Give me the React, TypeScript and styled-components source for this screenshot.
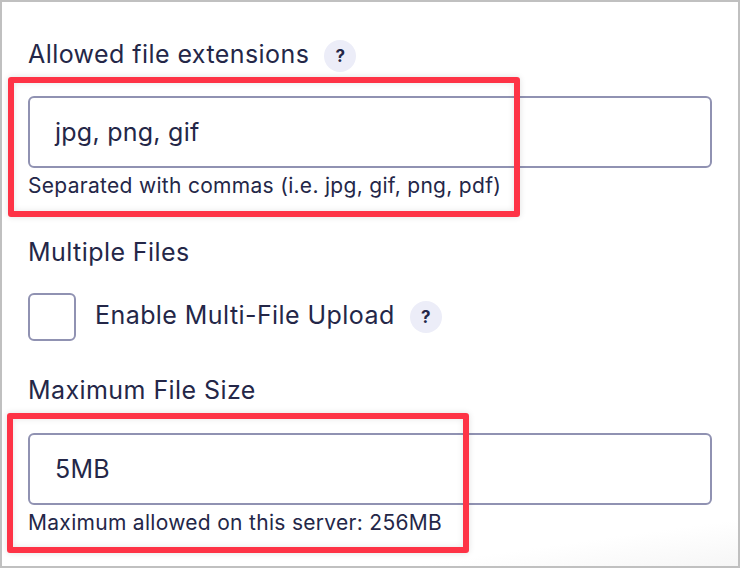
import React from 'react';
import styled, { createGlobalStyle } from 'styled-components';

const GlobalStyle = createGlobalStyle`
  html, body {
    margin: 0;
    padding: 0;
    background: #fff;
  }
  * {
    box-sizing: border-box;
  }
`;

const Frame = styled.div`
  width: 740px;
  height: 568px;
  overflow: hidden;
  padding: 38px 26px 0;
  border: 2px solid #c0c0c0;
  background: linear-gradient(172deg, #fff 93%, #f6f6f6 100%);
  font-family: Inter, 'Liberation Sans', sans-serif;
  color: #242748;
`;

const Field = styled.div`
  position: relative;
  display: flex;
  flex-direction: column;
  margin-bottom: ${(props: { $gap: number }) => props.$gap}px;
`;

const LabelRow = styled.div`
  display: flex;
  align-items: center;
  gap: 15px;
  height: 28px;
  font-size: 25px;
  line-height: 28px;
  letter-spacing: 0.43px;
`;

const CheckLabel = styled(LabelRow)`
  margin-top: -4px;
`;

const HelpBadge = styled.span`
  display: flex;
  align-items: center;
  justify-content: center;
  width: 32px;
  height: 32px;
  margin-top: 3px;
  border-radius: 50%;
  background: #ecedf8;
  font-size: 17px;
  font-weight: 700;
  letter-spacing: 0;
  color: #242748;
`;

const TextBox = styled.div`
  display: flex;
  align-items: center;
  width: 684px;
  height: 72px;
  margin-top: ${(props: { $top: number }) => props.$top}px;
  padding-left: 25px;
  border: 2px solid #9092b2;
  border-radius: 6px;
  font-size: 25px;
  letter-spacing: 0.25px;
`;

const Hint = styled.div`
  height: 24px;
  margin-top: 6px;
  font-size: 21px;
  line-height: 24px;
  letter-spacing: 0.3px;
`;

const CheckRow = styled.div`
  display: flex;
  align-items: center;
  margin-top: 27px;
`;

const CheckBox = styled.span`
  width: 48px;
  height: 48px;
  margin-right: 19px;
  border: 2px solid #9092b2;
  border-radius: 6px;
`;

const Highlight = styled.div<{ $width: number; $left: number; $top: number }>`
  position: absolute;
  left: ${(props) => props.$left}px;
  top: ${(props) => props.$top}px;
  width: ${(props) => props.$width}px;
  height: 140px;
  border: 6px solid #fe3346;
  border-radius: 3px;
  box-shadow: 0 0 6px rgba(0, 0, 0, 0.12), inset 0 0 6px rgba(0, 0, 0, 0.1);
`;

const App = () => {
  return (
    <>
      <GlobalStyle />
      <Frame>
        <Field $gap={40}>
          <LabelRow>
            Allowed file extensions
            <HelpBadge>?</HelpBadge>
          </LabelRow>
          <TextBox $top={28}>jpg, png, gif</TextBox>
          <Hint>Separated with commas (i.e. jpg, gif, png, pdf)</Hint>
          <Highlight $left={-20} $width={512} $top={37} />
        </Field>
        <Field $gap={35}>
          <LabelRow>Multiple Files</LabelRow>
          <CheckRow>
            <CheckBox />
            <CheckLabel>
              Enable Multi-File Upload
              <HelpBadge>?</HelpBadge>
            </CheckLabel>
          </CheckRow>
        </Field>
        <Field $gap={0}>
          <LabelRow>Maximum File Size</LabelRow>
          <TextBox $top={29}>5MB</TextBox>
          <Hint>Maximum allowed on this server: 256MB</Hint>
          <Highlight $left={-21} $width={462} $top={37} />
        </Field>
      </Frame>
    </>
  );
};

export default App;
